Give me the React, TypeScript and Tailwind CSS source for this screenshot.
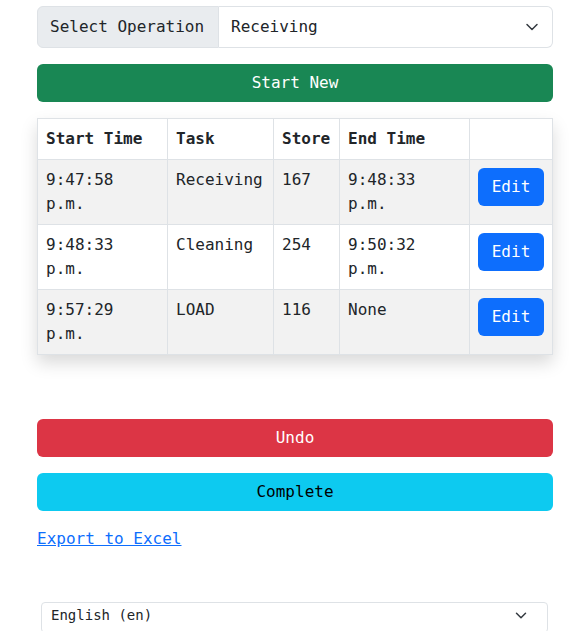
import React from "react";

const Chevron = ({ w = 16, h = 12, sw = 2 }: { w?: number; h?: number; sw?: number }) => (
  <svg width={w} height={h} viewBox="0 0 16 12" fill="none">
    <path d="m2 3 6 6 6-6" stroke="#343a40" strokeWidth={sw} strokeLinecap="round" strokeLinejoin="round" />
  </svg>
);

const rows = [
  { start: ["9:47:58", "p.m."], task: "Receiving", store: "167", end: ["9:48:33", "p.m."], striped: true },
  { start: ["9:48:33", "p.m."], task: "Cleaning", store: "254", end: ["9:50:32", "p.m."], striped: false },
  { start: ["9:57:29", "p.m."], task: "LOAD", store: "116", end: ["None"], striped: true },
];

export default function App() {
  return (
    <div className="w-[588px] h-[631px] bg-white text-[#212529] text-[16px] leading-6 font-['DejaVu_Sans_Mono',monospace] overflow-hidden">
      <div className="ml-[37px] w-[516px] pt-[6px]">
        <div className="flex h-[42px]">
          <div className="flex items-center px-3 bg-[#e9ecef] border border-[#dee2e6] rounded-l-md w-[182px] whitespace-nowrap">
            Select Operation
          </div>
          <div className="flex-1 flex items-center justify-between pl-3 pr-[13px] border border-l-0 border-[#dee2e6] rounded-r-md">
            <span>Receiving</span>
            <Chevron w={14} h={10} sw={1.8} />
          </div>
        </div>

        <button className="mt-4 w-full h-[38px] rounded-md bg-[#198754] text-white flex items-center justify-center">
          Start New
        </button>

        <div className="mt-4 shadow-[0_8px_16px_rgba(0,0,0,0.15)]">
          <table className="w-full border-collapse table-fixed">
            <thead>
              <tr className="bg-white">
                <th className="w-[130px] text-left font-bold border border-[#dee2e6] px-2 py-2 align-top">Start Time</th>
                <th className="w-[106px] text-left font-bold border border-[#dee2e6] px-2 py-2 align-top">Task</th>
                <th className="w-[66px] text-left font-bold border border-[#dee2e6] px-2 py-2 align-top whitespace-nowrap">Store</th>
                <th className="w-[130px] text-left font-bold border border-[#dee2e6] px-2 py-2 align-top">End Time</th>
                <th className="text-left font-bold border border-[#dee2e6] px-2 py-2 align-top"></th>
              </tr>
            </thead>
            <tbody>
              {rows.map((r, i) => (
                <tr key={i} className={r.striped ? "bg-[#f2f2f2]" : "bg-white"}>
                  <td className="border border-[#dee2e6] px-2 py-2 align-top h-[65px]">
                    {r.start.map((s, j) => (
                      <div key={j}>{s}</div>
                    ))}
                  </td>
                  <td className="border border-[#dee2e6] px-2 py-2 align-top">{r.task}</td>
                  <td className="border border-[#dee2e6] px-2 py-2 align-top">{r.store}</td>
                  <td className="border border-[#dee2e6] px-2 py-2 align-top">
                    {r.end.map((s, j) => (
                      <div key={j}>{s}</div>
                    ))}
                  </td>
                  <td className="border border-[#dee2e6] px-2 py-2 align-top">
                    <button className="w-[66px] h-[38px] rounded-md bg-[#0d6efd] text-white flex items-center justify-center">
                      Edit
                    </button>
                  </td>
                </tr>
              ))}
            </tbody>
          </table>
        </div>

        <button className="mt-[64px] w-full h-[38px] rounded-md bg-[#dc3545] text-white flex items-center justify-center">
          Undo
        </button>
        <button className="mt-4 w-full h-[38px] rounded-md bg-[#0dcaf0] text-black flex items-center justify-center">
          Complete
        </button>

        <div className="mt-4">
          <a href="#" className="text-[#0d6efd] underline">Export to Excel</a>
        </div>
      </div>

      <div className="mt-[51px] ml-[41px] w-[507px] h-[31px] border border-[#dee2e6] rounded-[4px] flex items-start justify-between pl-[9px] pr-[20px] pt-[2px] text-[14px] leading-[21px]">
        <span>English (en)</span>
        <span className="pt-[6px]">
          <Chevron w={12} h={9} />
        </span>
      </div>
    </div>
  );
}
